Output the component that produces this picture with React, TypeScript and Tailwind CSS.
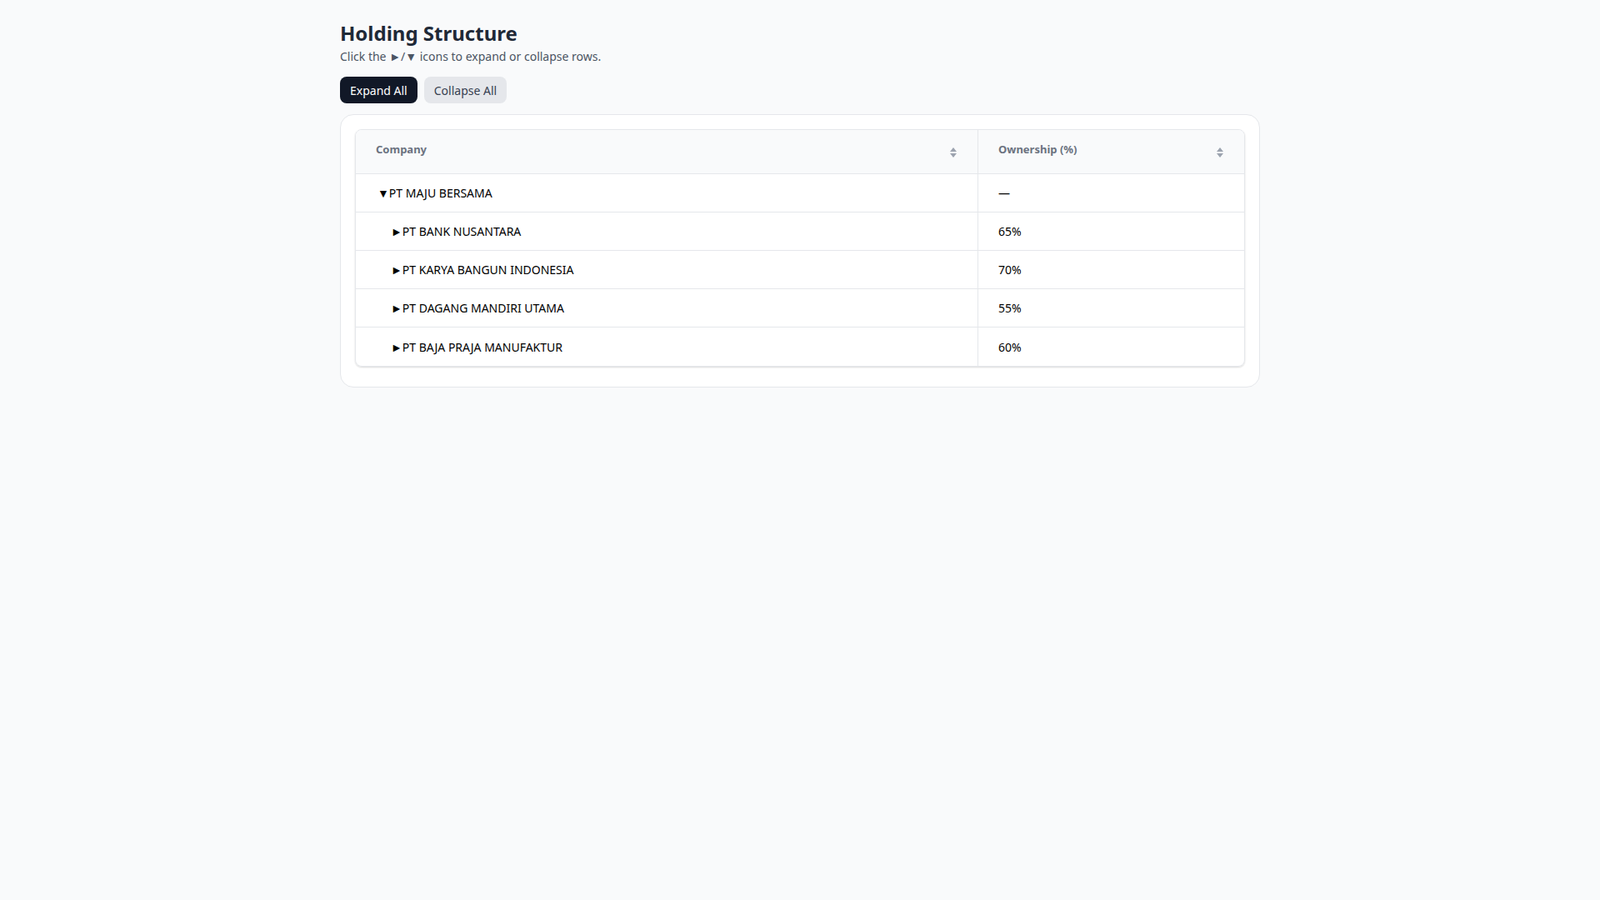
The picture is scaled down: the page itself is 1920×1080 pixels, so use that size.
import React, { useState } from "react";

const children = [
  ["PT BANK NUSANTARA", "65%"],
  ["PT KARYA BANGUN INDONESIA", "70%"],
  ["PT DAGANG MANDIRI UTAMA", "55%"],
  ["PT BAJA PRAJA MANUFAKTUR", "60%"],
];

function Sort() {
  return (
    <svg width="10" height="14" viewBox="0 0 10 14" className="mt-[6px]">
      <path d="M5 1 L9 6 H1 Z" fill="#9ca3af" />
      <path d="M5 13 L9 8 H1 Z" fill="#9ca3af" />
    </svg>
  );
}

export default function App() {
  const [open, setOpen] = useState(true);
  return (
    <div className="min-h-screen bg-[#f9fafb] font-['DejaVu_Sans',sans-serif] text-gray-900">
      <div className="mx-auto max-w-[1104px] pt-[24px]">
        <h1 className="text-[24px] font-bold leading-[32px] text-[#1f2937]">Holding Structure</h1>
        <p className="text-[14px] leading-[20px] text-[#4b5563] mt-[2px]">Click the ►/▼ icons to expand or collapse rows.</p>
        <div className="flex gap-2 mt-[14px]">
          <button onClick={() => setOpen(true)} className="h-[32px] px-3 rounded-lg bg-[#111827] text-white text-[14px]">Expand All</button>
          <button onClick={() => setOpen(false)} className="h-[32px] px-3 rounded-lg bg-[#e5e7eb] text-[#374151] text-[14px]">Collapse All</button>
        </div>
        <div className="mt-[13px] bg-white border border-[#e5e7eb] rounded-2xl pt-[17px] px-[17px] pb-[24px]">
          <div className="border border-[#e5e7eb] rounded-lg overflow-hidden shadow-[0_1px_2px_rgba(0,0,0,0.15)]">
            <div className="flex bg-[#f9fafb] border-b border-[#e5e7eb] h-[53px] text-[13px] font-bold text-[#6b7280]">
              <div className="w-[747px] border-r border-[#e5e7eb] px-6 pt-[14px] flex justify-between items-start">
                <span>Company</span><Sort />
              </div>
              <div className="flex-1 px-6 pt-[14px] flex justify-between items-start">
                <span>Ownership (%)</span><Sort />
              </div>
            </div>
            {[["▼PT MAJU BERSAMA", "—", 0] as const, ...(open ? children.map(([n, p]) => ["►" + n, p, 1] as const) : [])].map(([n, p, l], i, a) => (
              <div key={i} className={`flex h-[46px] items-center text-[14px] text-black ${i < a.length - 1 ? "border-b border-[#e5e7eb]" : ""}`}>
                <div className={`w-[747px] h-full flex items-center border-r border-[#e5e7eb] ${l ? "pl-[42px]" : "pl-[26px]"}`}>{open || l ? n : "►PT MAJU BERSAMA"}</div>
                <div className="flex-1 px-6">{p}</div>
              </div>
            ))}
          </div>
        </div>
      </div>
    </div>
  );
}
